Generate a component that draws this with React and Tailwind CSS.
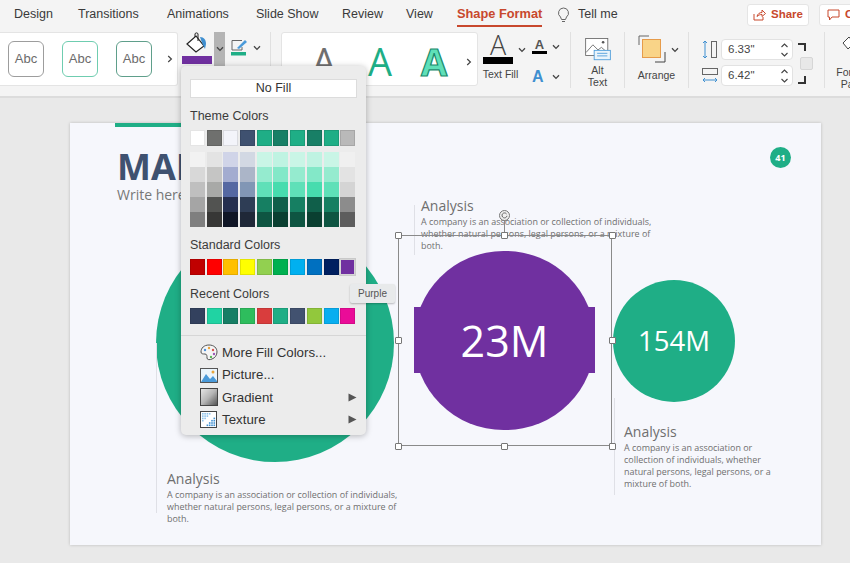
import React from "react";

const tabs = [
  { label: "Design", w: "w-[64px]" },
  { label: "Transitions", w: "w-[89px]" },
  { label: "Animations", w: "w-[89px]" },
  { label: "Slide Show", w: "w-[86px]" },
  { label: "Review", w: "w-[64px]" },
  { label: "View", w: "w-[51px]" },
];

const themeTop = ["#ffffff", "#6f706e", "#f3f4fa", "#3f5170", "#1fae86", "#187f66", "#1fae86", "#187f66", "#1fae86", "#b9b9b9"];

const green1 = ["#c9f5e6", "#95ebcf", "#5fe0b8", "#167f62", "#0e5542"];
const green2 = ["#bff3e2", "#83e8c8", "#47dcae", "#105f4a", "#0a3f31"];
const themeShades = [
  ["#f2f2f2", "#d8d8d8", "#bfbfbf", "#a5a5a5", "#7f7f7f"],
  ["#e3e3e3", "#c5c5c4", "#a8a9a7", "#525351", "#373736"],
  ["#d0d4e8", "#a3acd0", "#5568a2", "#252f4f", "#101626"],
  ["#d2d8e3", "#abb5c8", "#8196b5", "#2e3d55", "#1f2838"],
  green1,
  green2,
  green1,
  green2,
  green1,
  ["#f0f0f0", "#e3e3e3", "#d4d4d4", "#8c8c8c", "#5d5d5d"],
];

const standard = ["#c00000", "#ff0000", "#ffc000", "#ffff00", "#92d050", "#00b050", "#00b0f0", "#0070c0", "#002060", "#7030a0"];
const recent = ["#33415e", "#20d3a3", "#177e65", "#2ebd5d", "#d93d3d", "#1fae86", "#425270", "#92c83c", "#08aef0", "#ea0c98"];

const Chevron = ({ className = "" }) => (
  <svg width="8" height="6" viewBox="0 0 8 6" className={className}>
    <path d="M1 1.2 L4 4.4 L7 1.2" fill="none" stroke="#444" strokeWidth="1.3" />
  </svg>
);

const Caret = ({ className = "" }) => (
  <svg width="6" height="8" viewBox="0 0 6 8" className={className}>
    <path d="M1.2 1 L4.4 4 L1.2 7" fill="none" stroke="#444" strokeWidth="1.2" />
  </svg>
);

const AbcBox = ({ border }) => (
  <div className={`w-[36px] h-[36px] rounded-[6px] border-[1.5px] bg-white flex items-center justify-center text-[13px] text-[#6b6b6b] ${border}`}>
    Abc
  </div>
);

const Handle = ({ x, y }) => (
  <div className="absolute w-[7px] h-[7px] bg-white border border-[#777] rounded-[1px]" style={{ left: x - 3.5, top: y - 3.5 }} />
);

const Swatch = ({ color, className = "" }) => (
  <div className={`w-[15px] h-[16px] border border-black/10 ${className}`} style={{ backgroundColor: color }} />
);

const SizeField = ({ value }) => (
  <div className="w-[72px] h-[21px] bg-white rounded-[4px] border border-[#e2e2e2] flex items-center justify-between pl-[6px] pr-[3px] text-[11.5px] text-[#444]">
    <span>{value}</span>
    <svg width="9" height="16" viewBox="0 0 9 16">
      <path d="M1.5 5 L4.5 2 L7.5 5 M1.5 11 L4.5 14 L7.5 11" fill="none" stroke="#444" strokeWidth="1.1" />
    </svg>
  </div>
);

const Analysis = ({ x, y, w, lines }) => (
  <div className="absolute text-[#6f6f6f]" style={{ left: x, top: y, width: w }}>
    <div className="text-[14px] leading-[18px]">Analysis</div>
    <div className="text-[8.95px] leading-[12px] mt-[1px]">
      {lines.map((l) => (
        <div key={l} className="whitespace-nowrap">{l}</div>
      ))}
    </div>
  </div>
);

const MenuItem = ({ icon, label, arrow }) => (
  <div className="h-[22.4px] flex items-center pl-[19px] pr-[9px]">
    <span className="w-[22px] h-[18px] flex items-center">{icon}</span>
    <span className="text-[13.3px] text-[#333] flex-1">{label}</span>
    {arrow && (
      <svg width="9" height="9" viewBox="0 0 9 9"><path d="M0.5 0.5 L8.5 4.5 L0.5 8.5 Z" fill="#555" /></svg>
    )}
  </div>
);

const textureDots = [];
for (let r = 0; r < 6; r++) {
  for (let c = 0; c < 6; c++) {
    if (r + c < 4 || r + c > 6) textureDots.push([2 + c * 2.3, 2 + r * 2.3, r + c < 4 ? "#8fc3ea" : "#3f8fd0"]);
  }
}

const FillMenu = () => (
  <div className="absolute left-[181px] top-[66px] w-[185px] h-[369px] bg-[#ececec] rounded-[5px] shadow-[0_1px_6px_rgba(0,0,0,0.28)] flex flex-col font-['Liberation_Sans',sans-serif]">
    <div className="px-[9px] pt-[13px]">
      <div className="h-[19px] bg-white border border-[#dcdcdc] flex items-center justify-center text-[12.5px] text-[#333]">No Fill</div>
      <div className="mt-[10px] h-[16px] text-[12.5px] leading-[16px] text-[#3b3b3b]">Theme Colors</div>
      <div className="mt-[6px] flex gap-[1.7px]">
        {themeTop.map((c, i) => <Swatch key={i} color={c} />)}
      </div>
      <div className="mt-[6px] flex gap-[1.7px]">
        {themeShades.map((col, i) => (
          <div key={i} className="flex flex-col w-[15px]">
            {col.map((c, j) => <div key={j} className="h-[15px]" style={{ backgroundColor: c }} />)}
          </div>
        ))}
      </div>
      <div className="mt-[10px] h-[16px] text-[12.5px] leading-[16px] text-[#3b3b3b]">Standard Colors</div>
      <div className="mt-[6px] flex gap-[1.7px]">
        {standard.map((c, i) => (
          <Swatch key={i} color={c} className={i === 9 ? "border-[1.5px] border-[#a9a9a9] bg-clip-padding outline outline-[#c9c9c9]" : ""} />
        ))}
      </div>
      <div className="mt-[11px] h-[16px] text-[12.5px] leading-[16px] text-[#3b3b3b]">Recent Colors</div>
      <div className="mt-[6px] flex gap-[1.7px]">
        {recent.map((c, i) => <Swatch key={i} color={c} />)}
      </div>
    </div>
    <div className="mt-[11px] border-t border-[#d6d6d6]" />
    <div className="pt-[5.5px] flex flex-col">
      <MenuItem
        label="More Fill Colors..."
        icon={
          <svg width="18" height="17" viewBox="0 0 18 17">
            <path d="M9 1 C4 1 1 4 1 8 C1 10 3 10 5 10 C7 10 7 12 7 14 C7 16 10 16 12 15 C15 14 17 11 17 8 C17 4 14 1 9 1 Z" fill="#f5f5f5" stroke="#555" strokeWidth="1" />
            <circle cx="5" cy="6" r="1.2" fill="#4a90d9" />
            <circle cx="9" cy="4" r="1.2" fill="#e9a23b" />
            <circle cx="13" cy="6" r="1.2" fill="#d9534f" />
            <circle cx="14" cy="10" r="1.2" fill="#9b59b6" />
            <circle cx="11" cy="13" r="1.2" fill="#5cb85c" />
          </svg>
        }
      />
      <MenuItem
        label="Picture..."
        icon={
          <svg width="18" height="15" viewBox="0 0 18 15">
            <rect x="0.5" y="0.5" width="17" height="14" fill="#eaf4fb" stroke="#555" />
            <path d="M1 14 L6 6 L10 11 L13 8 L17 13 V14 Z" fill="#4a9ad9" />
            <circle cx="13" cy="4" r="1.5" fill="#e8a53a" />
          </svg>
        }
      />
      <MenuItem
        label="Gradient"
        arrow
        icon={
          <svg width="18" height="18" viewBox="0 0 18 18">
            <defs>
              <linearGradient id="gr" x1="0" y1="0" x2="1" y2="1">
                <stop offset="0" stopColor="#e8e8e8" />
                <stop offset="0.5" stopColor="#b5b5b5" />
                <stop offset="1" stopColor="#4f4f4f" />
              </linearGradient>
            </defs>
            <rect x="0.5" y="0.5" width="17" height="17" fill="url(#gr)" stroke="#444" />
          </svg>
        }
      />
      <MenuItem
        label="Texture"
        arrow
        icon={
          <svg width="17" height="17" viewBox="0 0 17 17">
            <rect x="0.5" y="0.5" width="16" height="16" fill="#fff" stroke="#444" />
            {textureDots.map(([x, y, c]) => (
              <rect key={`${x}-${y}`} x={x} y={y} width="1.6" height="1.6" fill={c} />
            ))}
          </svg>
        }
      />
    </div>
  </div>
);

const Slide = () => (
  <div className="relative w-[751px] h-[422px] bg-[#f6f7fc] shadow-[0_0_3px_rgba(0,0,0,0.2)] overflow-hidden font-['Open_Sans',sans-serif]">
    <div className="absolute left-[45px] top-0 w-[70px] h-[4px] bg-[#1fae86]" />
    <div className="absolute left-[47px] top-[22px] text-[36px] leading-[44px] font-bold text-[#3f5170]">MAIN</div>
    <div className="absolute left-[47px] top-[62px] text-[14px] leading-[20px] text-[#777]">Write here</div>
    <div className="absolute left-[700px] top-[24px] w-[21px] h-[21px] rounded-full bg-[#1fae86] text-white text-[9px] font-bold flex items-center justify-center">41</div>

    <div className="absolute left-[86px] top-[101px] w-[238px] h-[238px] rounded-full bg-[#1fae86]" />

    {/* thin guide lines beside the captions */}
    <div className="absolute left-[86px] top-[220px] w-px h-[170px] bg-[#dfe0e6]" />
    <div className="absolute left-[344px] top-[82px] w-px h-[50px] bg-[#dfe0e6]" />
    <div className="absolute left-[544px] top-[275px] w-px h-[97px] bg-[#dfe0e6]" />

    <Analysis x={97} y={347} w={240} lines={["A company is an association or collection of individuals,", "whether natural persons, legal persons, or a mixture of", "both."]} />
    <Analysis x={351} y={74} w={240} lines={["A company is an association or collection of individuals,", "whether natural persons, legal persons, or a mixture of", "both."]} />
    <Analysis x={554} y={300} w={160} lines={["A company is an association or", "collection of individuals, whether", "natural persons, legal persons, or a", "mixture of both."]} />

    {/* purple shape = circle + bar */}
    <div className="absolute left-[344px] top-[128px] w-[181px] h-[179px] flex items-center justify-center">
      <div className="absolute inset-0 rounded-full bg-[#7030a0]" />
      <div className="absolute left-0 right-0 top-[56px] h-[66px] bg-[#7030a0]" />
      <span className="relative text-white text-[43px] leading-none">23M</span>
    </div>

    <div className="absolute left-[543px] top-[157px] w-[122px] h-[122px] rounded-full bg-[#1fae86] flex items-center justify-center text-white text-[27.5px]">154M</div>

    {/* selection frame */}
    <div className="absolute left-[328px] top-[112px] w-[214px] h-[211px] border border-[#8a8a8a]" />
    <div className="absolute left-[434px] top-[96px] w-px h-[16px] bg-[#8a8a8a]" />
    <div className="absolute left-[429px] top-[87px] w-[11px] h-[11px] rounded-full border border-[#777] bg-[#f0f0f0] flex items-center justify-center">
      <svg width="7" height="7" viewBox="0 0 7 7"><path d="M5.6 2 A2.5 2.5 0 1 0 6 3.8" fill="none" stroke="#555" strokeWidth="0.9" /></svg>
    </div>
    {[
      [328, 112], [434.5, 112], [542, 112],
      [328, 217.5], [542, 217.5],
      [328, 323], [434.5, 323], [542, 323],
    ].map(([x, y]) => <Handle key={`${x}-${y}`} x={x} y={y} />)}
  </div>
);

export default function App() {
  return (
    <div className="relative w-[850px] h-[563px] overflow-hidden bg-[#e9e9e9] font-['Liberation_Sans',sans-serif] text-[#3a3a3a]">
      {/* tab row */}
      <div className="h-[29px] bg-[#f4f4f4] flex items-center pl-[14px] text-[12.5px]">
        {tabs.map((t) => (
          <div key={t.label} className={t.w}>{t.label}</div>
        ))}
        <div className="w-[100px] h-[29px] flex items-center">
          <span className="pb-[1px] pt-[2px] border-b-2 border-[#c8482d] text-[#c8482d] font-bold text-[12.8px]">Shape Format</span>
        </div>
        <svg width="13" height="16" viewBox="0 0 13 16" className="mr-[8px]">
          <path d="M6.5 1 A5 5 0 0 0 3.5 10 L4.5 12.5 H8.5 L9.5 10 A5 5 0 0 0 6.5 1 Z M5 14.5 H8" fill="none" stroke="#666" strokeWidth="1" />
        </svg>
        <span>Tell me</span>
        <div className="ml-auto flex items-center gap-[10px] -mr-[31px]">
          <div className="w-[62px] h-[22px] bg-white rounded-[3px] border border-[#e5e5e5] flex items-center justify-center gap-[5px] text-[#c8482d] font-bold text-[11.5px]">
            <svg width="13" height="12" viewBox="0 0 13 12">
              <path d="M1 5 V11 H10 V8 M4 7.5 C4.5 5 6.5 3.5 9 3.5 V1 L12.5 4.5 L9 7.5 V5.5 C7 5.5 5.5 6 4 7.5 Z" fill="none" stroke="#c8482d" strokeWidth="1" />
            </svg>
            Share
          </div>
          <div className="w-[62px] h-[22px] bg-white rounded-[3px] border border-[#e5e5e5] flex items-center pl-[7px] gap-[5px] text-[#c8482d] font-bold text-[11.5px] whitespace-nowrap">
            <svg width="13" height="12" viewBox="0 0 13 12" className="shrink-0">
              <path d="M1 1 H12 V8 H5 L2.5 11 V8 H1 Z" fill="none" stroke="#c8482d" strokeWidth="1" />
            </svg>
            Comments
          </div>
        </div>
      </div>

      {/* ribbon */}
      <div className="h-[69px] bg-[#f4f4f4] border-b-2 border-[#dcdcdc] flex items-start pt-[3px] text-[10.5px] text-[#444] overflow-hidden">
        {/* shape styles gallery */}
        <div className="w-[178px] h-[54px] bg-white rounded-r-[3px] border border-l-0 border-[#e4e4e4] flex items-center pl-[8px] shrink-0">
          <div className="flex gap-[18px]">
            <AbcBox border="border-[#9d9d9d]" />
            <AbcBox border="border-[#6fcdb0]" />
            <AbcBox border="border-[#5f9f8b]" />
          </div>
          <Caret className="ml-[15px]" />
        </div>

        {/* fill + outline */}
        <div className="w-[93px] h-[56px] flex shrink-0 border-r border-[#e0e0e0]">
          <div className="ml-[4px] w-[30px] h-[34px] flex flex-col items-center">
            <svg width="24" height="24" viewBox="0 0 24 24">
              <path d="M2 12 L11 4 L19 14 L11 20 Z" fill="#fff" stroke="#222" strokeWidth="1.2" />
              <path d="M10 5 V2 C10 0.5 13 0.5 13 2 V9" fill="none" stroke="#222" strokeWidth="1" />
              <path d="M15 5 C19 5 21 8 21 12 L20 17 L18 13 L16 8 Z" fill="#3f8fd0" />
            </svg>
            <div className="w-[30px] h-[8px] bg-[#7030a0]" />
          </div>
          <div className="ml-[2px] w-[11px] h-[34px] bg-[#b4b4b4] flex items-center justify-center"><Chevron /></div>
          <svg width="17" height="17" viewBox="0 0 17 17" className="ml-[6px] mt-[7px]">
            <path d="M1 1.5 H11 M1 1.5 V11 H11 V8" fill="none" stroke="#666" strokeWidth="1" />
            <path d="M6 9 L14 1 L16 3 L8 10 Z" fill="#4a9ad9" />
            <rect x="0" y="13" width="15" height="3.5" fill="#1fae86" />
          </svg>
          <Chevron className="ml-[5px] mt-[13px]" />
        </div>

        {/* WordArt gallery */}
        <div className="ml-[10px] w-[197px] h-[54px] bg-white rounded-[3px] border border-[#e4e4e4] flex items-center pl-[30px] pt-[3px] shrink-0 overflow-hidden relative">
          <span className="text-[38px] leading-none font-['Open_Sans',sans-serif] text-[#6f6f6f] w-[56px]">A</span>
          <span className="text-[38px] leading-none font-['Open_Sans',sans-serif] text-[#1fae86] w-[53px]">A</span>
          <span className="text-[38px] leading-none font-bold font-['Open_Sans',sans-serif] text-[#5fe0b8] [-webkit-text-stroke:1.2px_#1a8a6c]">A</span>
          <Caret className="absolute right-[5px] top-[25px]" />
        </div>

        {/* text fill etc */}
        <div className="w-[93px] h-[56px] flex shrink-0 border-r border-[#e0e0e0] pl-[4px]">
          <div className="flex flex-col items-center w-[32px]">
            <div className="h-[25px] text-[27px] leading-[25px] font-light font-['Open_Sans',sans-serif] text-[#444]">A</div>
            <div className="w-[30px] h-[7px] bg-black" />
            <div className="mt-[3px] ml-[5px] whitespace-nowrap">Text Fill</div>
          </div>
          <Chevron className="ml-[4px] mt-[15px]" />
          <div className="ml-[6px] mt-[3px] flex flex-col gap-[8px]">
            <div className="flex items-center gap-[5px] h-[24px]">
              <div className="flex flex-col items-center w-[15px]">
                <span className="text-[13px] leading-[12px] font-bold text-[#555]">A</span>
                <div className="w-[15px] h-[3px] bg-black" />
              </div>
              <Chevron />
            </div>
            <div className="flex items-center gap-[5px] h-[22px]">
              <span className="w-[15px] text-[16px] font-bold text-[#3f8fd0] leading-none">A</span>
              <Chevron />
            </div>
          </div>
        </div>

        {/* alt text */}
        <div className="w-[54px] h-[56px] flex flex-col items-center shrink-0 border-r border-[#e0e0e0] leading-[12px]">
          <svg width="30" height="27" viewBox="0 0 30 27" className="mt-[6px]">
            <rect x="0.5" y="0.5" width="26" height="20" fill="#fff" stroke="#666" />
            <path d="M1 17 L9 8 L15 14 L19 11 L26 17" fill="none" stroke="#666" />
            <circle cx="21" cy="5" r="1.5" fill="#555" />
            <rect x="10.5" y="14.5" width="19" height="11" fill="#eaf4fb" stroke="#4a9ad9" />
            <path d="M14 18 H26 M14 21 H26" stroke="#4a9ad9" />
          </svg>
          <div className="mt-[3px]">Alt</div>
          <div>Text</div>
        </div>

        {/* arrange */}
        <div className="w-[64px] h-[56px] flex flex-col items-center shrink-0 border-r border-[#e0e0e0]">
          <div className="flex mt-[3px] ml-[3px]">
            <svg width="28" height="28" viewBox="0 0 28 28">
              <path d="M1 10 V1 H11" fill="none" stroke="#666" />
              <path d="M17 27 H27 V17" fill="none" stroke="#444" />
              <rect x="4.5" y="4.5" width="18" height="18" fill="#f9d488" stroke="#e69b4a" />
            </svg>
            <Chevron className="ml-[5px] mt-[12px]" />
          </div>
          <div className="mt-[5px]">Arrange</div>
        </div>

        {/* size */}
        <div className="w-[136px] h-[56px] flex shrink-0 border-r border-[#e0e0e0] pl-[13px] pt-[7px]">
          <div className="flex flex-col gap-[5px]">
            <div className="flex items-center gap-[3px]">
              <svg width="16" height="21" viewBox="0 0 16 21">
                <path d="M3 2 V19 M1 4 L3 2 L5 4 M1 17 L3 19 L5 17" fill="none" stroke="#3f8fd0" />
                <rect x="9.5" y="2.5" width="5" height="16" fill="none" stroke="#666" />
              </svg>
              <SizeField value={'6.33"'} />
            </div>
            <div className="flex items-center gap-[3px]">
              <svg width="16" height="21" viewBox="0 0 16 21">
                <rect x="0.5" y="3.5" width="15" height="6" fill="none" stroke="#666" />
                <path d="M1 15 H15 M3 13 L1 15 L3 17 M13 13 L15 15 L13 17" fill="none" stroke="#3f8fd0" />
              </svg>
              <SizeField value={'6.42"'} />
            </div>
          </div>
          <div className="ml-[5px] flex flex-col items-center w-[16px]">
            <div className="w-[8px] h-[8px] border-t-2 border-r-2 border-[#333] mt-[4px] self-start" />
            <div className="w-[13px] h-[13px] bg-[#e8e8e8] border border-[#d6d6d6] rounded-[2px] mt-[6px]" />
            <div className="w-[8px] h-[8px] border-b-2 border-r-2 border-[#333] mt-[6px] self-start" />
          </div>
        </div>

        {/* format pane, cut off at the edge */}
        <div className="ml-[8px] w-[40px] flex flex-col items-center shrink-0 leading-[12px]">
          <svg width="22" height="24" viewBox="0 0 22 24" className="mt-[3px] self-start ml-[7px]">
            <path d="M3 8 L9 2 L14 8 L8 14 Z" fill="#fff" stroke="#444" />
            <path d="M12 22 H22 M12 22 L15 19" fill="none" stroke="#3f8fd0" strokeWidth="1.2" />
          </svg>
          <div className="mt-[7px] whitespace-nowrap">Format</div>
          <div className="whitespace-nowrap">Pane</div>
        </div>
      </div>

      {/* canvas */}
      <div className="pl-[70px] pt-[25px]">
        <Slide />
      </div>

      <FillMenu />

      <div className="absolute left-[350px] top-[284px] w-[45px] h-[19px] bg-[#e8eaeb] rounded-[2px] shadow-[0_1px_2px_rgba(0,0,0,0.25)] flex items-center justify-center text-[10px] text-[#555]">
        Purple
      </div>
    </div>
  );
}
